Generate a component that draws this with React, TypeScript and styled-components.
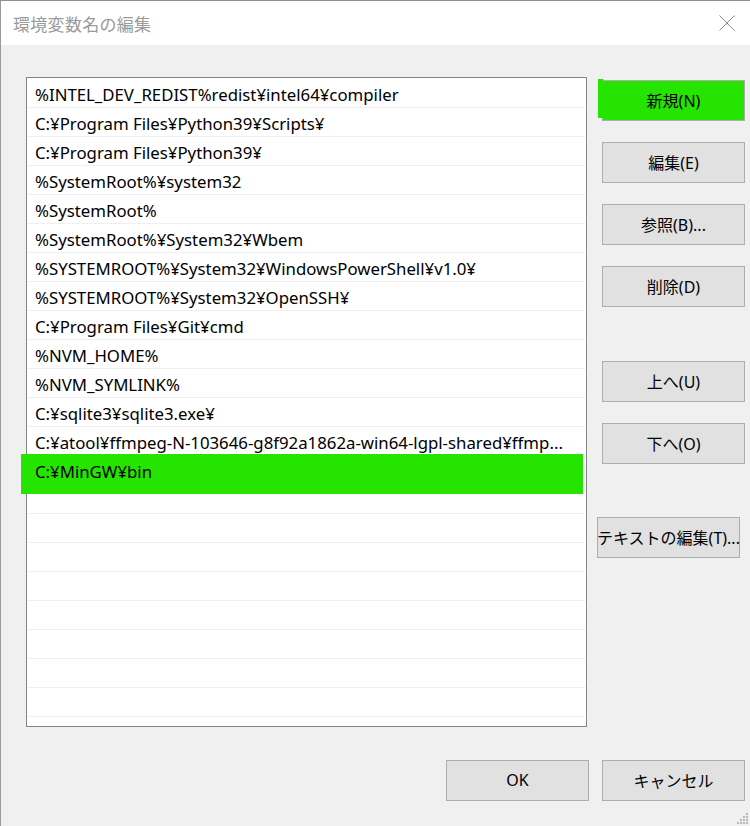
import React from 'react';
import styled, {createGlobalStyle} from 'styled-components';

const GlobalStyle = createGlobalStyle`
  html, body {
    margin: 0;
    padding: 0;
    background: #f0f0f0;
  }
  body {
    font-family: "Noto Sans", "Noto Sans CJK JP", sans-serif;
    color: #000;
  }
`;

const Window = styled.div`
  position: relative;
  width: 750px;
  height: 826px;
  box-sizing: border-box;
  border-top: 1px solid #8f8f8f;
  border-left: 1px solid #9a9a9a;
  background: #f0f0f0;
  display: flex;
  flex-direction: column;
  overflow: hidden;
`;

const TitleBar = styled.div`
  height: 44px;
  flex: none;
  background: #fff;
  display: flex;
  align-items: center;
  justify-content: space-between;
  padding-left: 12px;
  padding-right: 15px;
`;

const Title = styled.div`
  font-family: "Noto Sans CJK JP", sans-serif;
  font-size: 17px;
  color: #9a9a9a;
  letter-spacing: 0.3px;
`;

const CloseButton = styled.div`
  width: 16px;
  height: 16px;
  display: flex;
`;

const Body = styled.div`
  flex: 1;
  display: flex;
  flex-direction: column;
  padding: 32px 5px 0 25px;
`;

const Main = styled.div`
  display: flex;
  gap: 15px;
`;

const PathList = styled.div`
  width: 561px;
  height: 650px;
  box-sizing: border-box;
  border: 1px solid #7f858c;
  background: #fff;
  padding: 1px 1px 0;
  flex: none;
`;

const Row = styled.div<{$picked?: boolean}>`
  position: relative;
  height: 29px;
  box-sizing: border-box;
  border-bottom: 1px solid #f0f0f0;
  padding: 0 7px;
  display: flex;
  align-items: center;
  font-size: 16.8px;
  line-height: 29px;

  &::before {
    content: '';
    display: ${({$picked}) => ($picked ? 'block' : 'none')};
    position: absolute;
    left: -7px;
    top: -2px;
    width: 562px;
    height: 40px;
    background: #24e400;
  }
`;

const RowText = styled.span`
  position: relative;
  white-space: nowrap;
  padding-top: 3px;
`;

const SideButtons = styled.div`
  display: flex;
  flex-direction: column;
  padding-top: 3px;
`;

const Button = styled.button<{$top?: number; $shift?: number; $marked?: boolean}>`
  position: relative;
  width: 143px;
  height: 41px;
  margin-top: ${({$top}) => $top ?? 21}px;
  margin-left: ${({$shift}) => $shift ?? 0}px;
  box-sizing: border-box;
  border: 1px solid #adadad;
  background: ${({$marked}) => ($marked ? '#24e400' : '#e1e1e1')};
  font-family: "Noto Sans", "Noto Sans CJK JP", sans-serif;
  font-size: 16px;
  color: #000;
  padding: 0 0 2px;
  display: flex;
  align-items: center;
  justify-content: center;
  white-space: nowrap;

  &::before {
    content: '';
    display: ${({$marked}) => ($marked ? 'block' : 'none')};
    position: absolute;
    left: -5px;
    top: -2px;
    width: 5px;
    height: 39px;
    background: #24e400;
  }
`;

const Footer = styled.div`
  display: flex;
  justify-content: flex-end;
  gap: 13px;
  margin-top: 33px;
`;

const Grip = styled.div`
  position: absolute;
  right: 1px;
  bottom: 1px;
  width: 12px;
  height: 12px;
  display: flex;
`;

// long entries come already shortened, as the list control shows them
const paths = [
    '%INTEL_DEV_REDIST%redist¥intel64¥compiler',
    'C:¥Program Files¥Python39¥Scripts¥',
    'C:¥Program Files¥Python39¥',
    '%SystemRoot%¥system32',
    '%SystemRoot%',
    '%SystemRoot%¥System32¥Wbem',
    '%SYSTEMROOT%¥System32¥WindowsPowerShell¥v1.0¥',
    '%SYSTEMROOT%¥System32¥OpenSSH¥',
    'C:¥Program Files¥Git¥cmd',
    '%NVM_HOME%',
    '%NVM_SYMLINK%',
    'C:¥sqlite3¥sqlite3.exe¥',
    'C:¥atool¥ffmpeg-N-103646-g8f92a1862a-win64-lgpl-shared¥ffmp...',
    'C:¥MinGW¥bin',
];

// the list shows 22 full rows, empty ones keep their separators
const TOTAL_ROWS = 22;

const App = () => {
    const rows = Array.from({length: TOTAL_ROWS}, (_, i) => paths[i] ?? '');
    const picked = paths.length - 1;

    return (
        <>
            <GlobalStyle/>
            <Window>
                <TitleBar>
                    <Title>環境変数名の編集</Title>
                    <CloseButton>
                        <svg width="16" height="16" viewBox="0 0 16 16">
                            <path d="M0.5 0.5L15.5 15.5M15.5 0.5L0.5 15.5" stroke="#8a8a8a" strokeWidth="1" fill="none"/>
                        </svg>
                    </CloseButton>
                </TitleBar>
                <Body>
                    <Main>
                        <PathList>
                            {rows.map((p, i) => (
                                <Row key={i} $picked={i === picked}>
                                    <RowText>{p}</RowText>
                                </Row>
                            ))}
                        </PathList>
                        <SideButtons>
                            <Button $top={0} $marked>新規(N)</Button>
                            <Button>編集(E)</Button>
                            <Button>参照(B)...</Button>
                            <Button>削除(D)</Button>
                            <Button $top={54}>上へ(U)</Button>
                            <Button>下へ(O)</Button>
                            <Button $top={53} $shift={-5}>テキストの編集(T)...</Button>
                        </SideButtons>
                    </Main>
                    <Footer>
                        <Button $top={0}>OK</Button>
                        <Button $top={0}>キャンセル</Button>
                    </Footer>
                </Body>
                <Grip>
                    <svg width="12" height="12" viewBox="0 0 12 12">
                        {[[9, 0], [9, 3], [6, 3], [9, 6], [6, 6], [3, 6], [9, 9], [6, 9], [3, 9], [0, 9]].map(([x, y]) => (
                            <rect key={`${x}-${y}`} x={x} y={y} width="2" height="2" fill="#b8b8b8"/>
                        ))}
                    </svg>
                </Grip>
            </Window>
        </>
    );
};

export default App;
